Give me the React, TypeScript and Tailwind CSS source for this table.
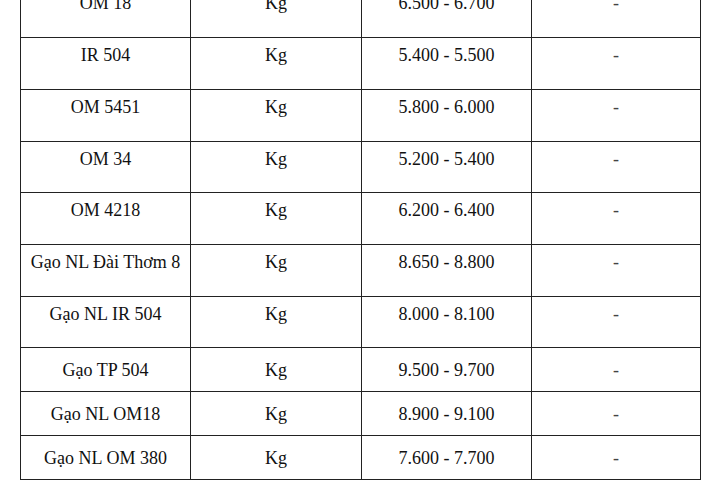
const rows: { name: string; price: string; h: number }[] = [
  { name: "OM 18", price: "6.500 - 6.700", h: 52 },
  { name: "IR 504", price: "5.400 - 5.500", h: 52 },
  { name: "OM 5451", price: "5.800 - 6.000", h: 52 },
  { name: "OM 34", price: "5.200 - 5.400", h: 51 },
  { name: "OM 4218", price: "6.200 - 6.400", h: 52 },
  { name: "Gạo NL Đài Thơm 8", price: "8.650 - 8.800", h: 52 },
  { name: "Gạo NL IR 504", price: "8.000 - 8.100", h: 51 },
  { name: "Gạo TP 504", price: "9.500 - 9.700", h: 44 },
  { name: "Gạo NL OM18", price: "8.900 - 9.100", h: 44 },
  { name: "Gạo NL OM 380", price: "7.600 - 7.700", h: 44 },
]

export default function App() {
  return (
    <div className="w-[720px] h-[480px] overflow-hidden bg-white font-['Liberation_Serif','Times_New_Roman',serif] text-[18px] leading-[22px] text-[#111]">
      <table className="mt-[-15px] ml-[20px] w-[680px] table-fixed border-collapse">
        <colgroup>
          <col className="w-[170px]" />
          <col className="w-[171px]" />
          <col className="w-[170px]" />
          <col className="w-[169px]" />
        </colgroup>
        <tbody>
          {rows.map((r) => {
            const tall = r.h > 48
            const cell = `border border-[#222] text-center p-0 ${tall ? "align-top pt-[6px]" : "align-middle"}`
            return (
              <tr key={r.name} style={{ height: r.h }}>
                <td className={cell}>{r.name}</td>
                <td className={cell}>Kg</td>
                <td className={cell}>{r.price}</td>
                <td className={`${cell} text-[#444]`}>-</td>
              </tr>
            )
          })}
        </tbody>
      </table>
    </div>
  )
}
